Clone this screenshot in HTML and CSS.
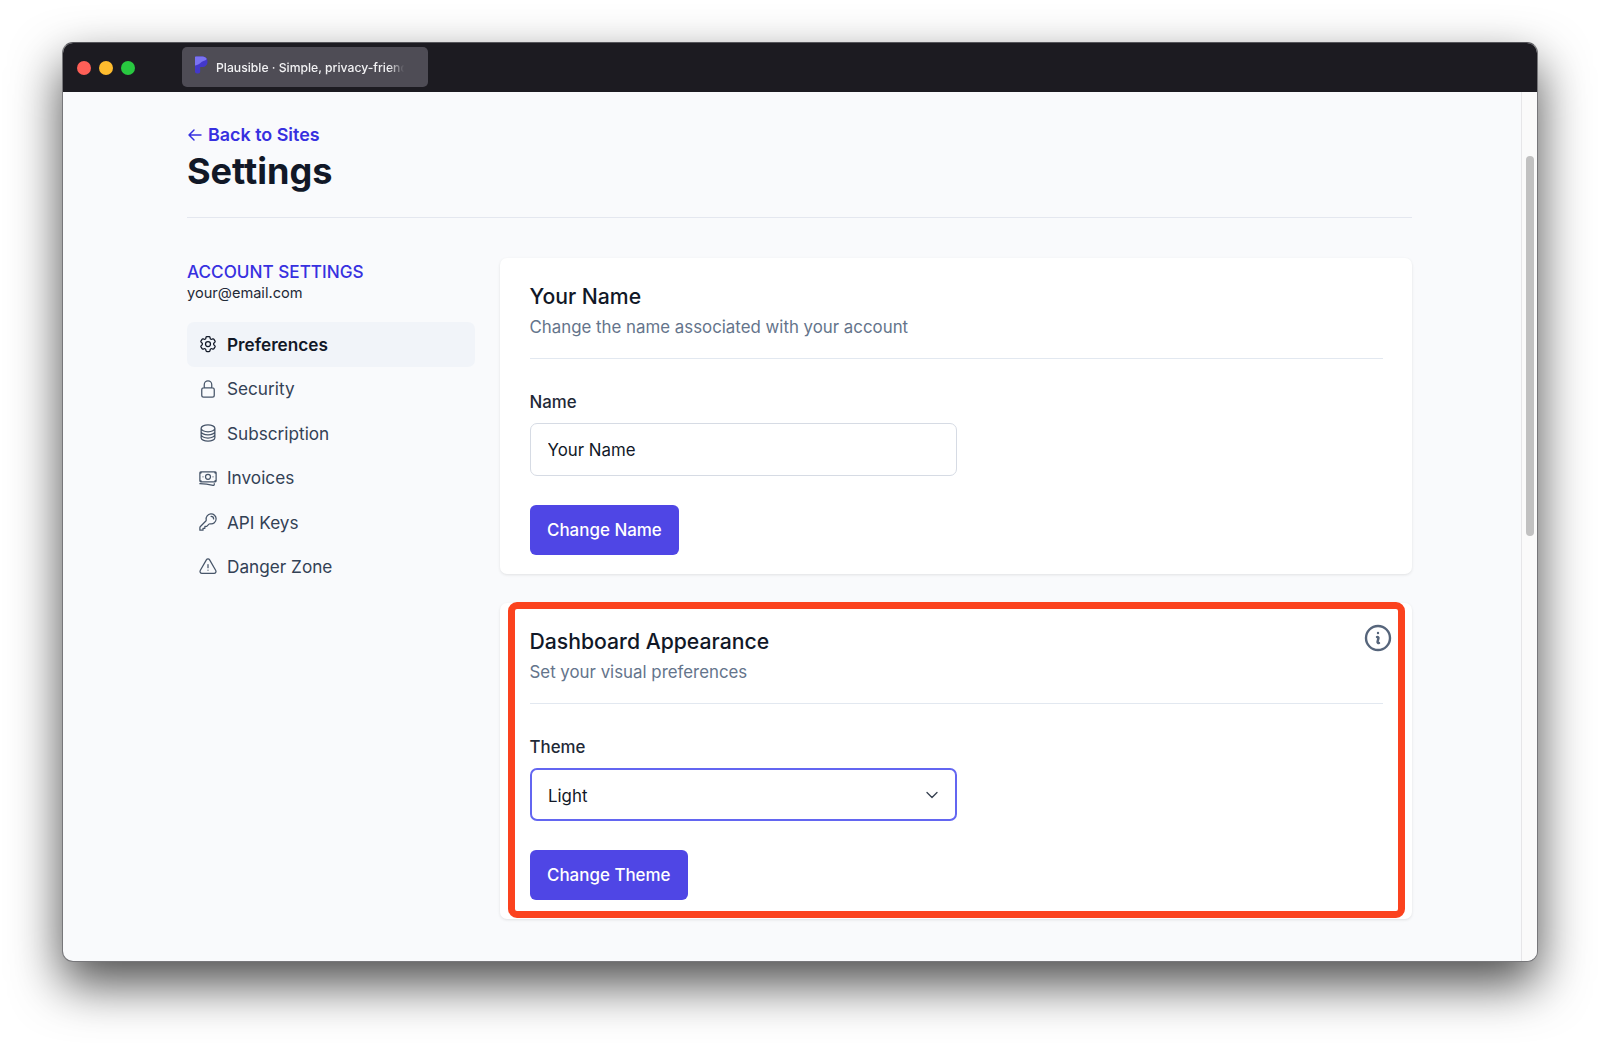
FILE: index.html
```html
<!DOCTYPE html>
<html>
  <head>
    <meta charset="utf-8" />
    <title>Plausible - Settings</title>
    <link rel="stylesheet" href="styles.css">
  </head>
  <body>
    <div class="window">
      <div class="titlebar">
        <div class="lights">
          <span class="light light-red"></span>
          <span class="light light-yellow"></span>
          <span class="light light-green"></span>
        </div>
        <div class="tab">
          <svg class="tab-logo" viewBox="0 0 14 18">
            <path d="M1 1.500C1 .8 1.500.5 2 .5h6.500c3 0 5 2.200 5 5.200 0 3.100-2.200 5.300-5.200 5.300H6.200v4.500c0 1.200-.8 2-2 2H3c-1.200 0-2-.8-2-2z" fill="#4338ca"/>
            <path d="M1 1.500C1 .8 1.500.5 2 .5h6.500c2 0 3.500 1 4.300 2.400-1.800 2.300-3.300 1.500-5.300 3.200C5.800 7.700 3.600 9.500 1 9.400z" fill="#7a72f2"/>
          </svg>
          <span class="tab-title">Plausible · Simple, privacy-friend</span>
        </div>
      </div>
      <div class="viewport">
        <div class="page">
          <div class="page-header">
            <a class="back-link" href="#">
              <svg class="back-arrow" viewBox="0 0 24 24"><path d="M10.500 19.500 3 12m0 0 7.500-7.500M3 12h18"/></svg>
              Back to Sites
            </a>
            <h1>Settings</h1>
          </div>
          <div class="columns">
            <div class="sidebar">
              <div class="sidebar-title">ACCOUNT SETTINGS</div>
              <div class="sidebar-email">your@email.com</div>
              <div class="nav">
                <a class="nav-item active" href="#">
                  <svg class="icon" viewBox="0 0 24 24"><path d="M9.594 3.940c.09-.542.56-.94 1.110-.94h2.593c.55 0 1.020.398 1.110.94l.213 1.281c.063.374.313.686.645.87.074.04.147.083.22.127.325.196.72.257 1.075.124l1.217-.456a1.125 1.125 0 0 1 1.370.49l1.296 2.247a1.125 1.125 0 0 1-.26 1.431l-1.003.827c-.293.241-.438.613-.43.992a7.723 7.723 0 0 1 0 .255c-.008.378.137.75.43.991l1.004.827c.424.35.534.955.26 1.430l-1.298 2.247a1.125 1.125 0 0 1-1.369.491l-1.217-.456c-.355-.133-.75-.072-1.076.124a6.470 6.470 0 0 1-.22.128c-.331.183-.581.495-.644.869l-.213 1.281c-.09.543-.56.94-1.110.94h-2.594c-.55 0-1.019-.398-1.110-.94l-.213-1.281c-.062-.374-.312-.686-.644-.87a6.520 6.520 0 0 1-.22-.127c-.325-.196-.72-.257-1.076-.124l-1.217.456a1.125 1.125 0 0 1-1.369-.49l-1.297-2.247a1.125 1.125 0 0 1 .26-1.431l1.004-.827c.292-.24.437-.613.43-.991a6.932 6.932 0 0 1 0-.255c.007-.38-.138-.751-.43-.992l-1.004-.827a1.125 1.125 0 0 1-.26-1.430l1.297-2.247a1.125 1.125 0 0 1 1.370-.491l1.216.456c.356.133.751.072 1.076-.124.072-.044.146-.086.22-.128.332-.183.582-.495.644-.869l.214-1.280Z"/><path d="M15 12a3 3 0 1 1-6 0 3 3 0 0 1 6 0Z"/></svg>
                  Preferences
                </a>
                <a class="nav-item" href="#">
                  <svg class="icon" viewBox="0 0 24 24"><path d="M16.500 10.500V6.750a4.500 4.500 0 1 0-9 0v3.750m-.75 11.250h10.500a2.250 2.250 0 0 0 2.250-2.250v-6.750a2.250 2.250 0 0 0-2.250-2.250H6.750a2.250 2.250 0 0 0-2.250 2.250v6.750a2.250 2.250 0 0 0 2.250 2.250Z"/></svg>
                  Security
                </a>
                <a class="nav-item" href="#">
                  <svg class="icon" viewBox="0 0 24 24"><path d="M20.250 6.375c0 2.278-3.694 4.125-8.250 4.125S3.750 8.653 3.750 6.375m16.500 0c0-2.278-3.694-4.125-8.250-4.125S3.750 4.097 3.750 6.375m16.500 0v11.250c0 2.278-3.694 4.125-8.250 4.125s-8.250-1.847-8.250-4.125V6.375m16.500 0v3.750m-16.500-3.750v3.750m16.500 0v3.750C20.250 16.153 16.556 18 12 18s-8.250-1.847-8.250-4.125v-3.750m16.500 0c0 2.278-3.694 4.125-8.250 4.125s-8.250-1.847-8.250-4.125"/></svg>
                  Subscription
                </a>
                <a class="nav-item" href="#">
                  <svg class="icon" viewBox="0 0 24 24"><path d="M2.250 18.750a60.070 60.070 0 0 1 15.797 2.101c.727.198 1.453-.342 1.453-1.096V18.750M3.750 4.500v.75A.75.75 0 0 1 3 6h-.75m0 0v-.375c0-.621.504-1.125 1.125-1.125H20.250M2.250 6v9m18-10.500v.75c0 .414.336.75.75.75h.75m-1.500-1.500h.375c.621 0 1.125.504 1.125 1.125v9.750c0 .621-.504 1.125-1.125 1.125h-.375m1.500-1.500H21a.75.75 0 0 0-.75.75v.75m0 0H3.750m0 0h-.375a1.125 1.125 0 0 1-1.125-1.125V15m1.500 1.500v-.75A.75.75 0 0 0 3 15h-.75M15 10.500a3 3 0 1 1-6 0 3 3 0 0 1 6 0Zm3 0h.008v.008H18V10.500Zm-12 0h.008v.008H6V10.500Z"/></svg>
                  Invoices
                </a>
                <a class="nav-item" href="#">
                  <svg class="icon" viewBox="0 0 24 24"><path d="M15.750 5.250a3 3 0 0 1 3 3m3 0a6 6 0 0 1-7.029 5.912c-.563-.097-1.159.026-1.563.43L10.500 17.250H8.250v2.250H6v2.250H2.250v-2.818c0-.597.237-1.170.659-1.591l6.499-6.499c.404-.404.527-1 .43-1.563A6 6 0 1 1 21.750 8.250Z"/></svg>
                  API Keys
                </a>
                <a class="nav-item" href="#">
                  <svg class="icon" viewBox="0 0 24 24"><path d="M12 9v3.750m-9.303 3.376c-.866 1.500.217 3.374 1.948 3.374h14.710c1.730 0 2.813-1.874 1.948-3.374L13.949 3.378c-.866-1.500-3.032-1.500-3.898 0L2.697 16.126ZM12 15.750h.007v.008H12v-.008Z"/></svg>
                  Danger Zone
                </a>
              </div>
            </div>
            <div class="cards">
              <div class="card">
                <h2>Your Name</h2>
                <p class="card-sub">Change the name associated with your account</p>
                <div class="card-rule"></div>
                <label class="field-label">Name</label>
                <input class="field" type="text" value="Your Name" />
                <button class="btn">Change Name</button>
              </div>
              <div class="card">
                <svg class="card-info" viewBox="0 0 24 24"><path d="m11.250 11.250.041-.02a.75.75 0 0 1 1.063.852l-.708 2.836a.75.75 0 0 0 1.063.853l.041-.021M21 12a9 9 0 1 1-18 0 9 9 0 0 1 18 0Zm-9-3.750h.008v.008H12V8.250Z"/></svg>
                <h2>Dashboard Appearance</h2>
                <p class="card-sub">Set your visual preferences</p>
                <div class="card-rule"></div>
                <label class="field-label">Theme</label>
                <div class="select-wrap">
                  <select class="field field-focus">
                    <option>Light</option>
                    <option>Dark</option>
                    <option>System</option>
                  </select>
                  <svg class="select-chevron" viewBox="0 0 24 24"><path d="m19.500 8.250-7.500 7.500-7.500-7.500"/></svg>
                </div>
                <button class="btn">Change Theme</button>
                <div class="highlight"></div>
              </div>
            </div>
          </div>
        </div>
        <div class="scrollbar">
          <div class="scrollbar-thumb"></div>
        </div>
      </div>
    </div>
  </body>
</html>
```

FILE: styles.css
```css
* {
    box-sizing: border-box;
}
body {
    font-family: Inter, "Liberation Sans", sans-serif;
    background: #ffffff;
    margin: 0;
    padding: 42px 62px 0 62px;
    height: 1043px;
    overflow: hidden;
}
.window {
    display: flex;
    flex-direction: column;
    height: 920px;
    background: #f9fafc;
    border-radius: 11px;
    overflow: hidden;
    border: 1px solid #77777a;
    border-top-color: #55555a;
    box-shadow: 0 22px 50px rgba(0, 0, 0, 0.7);
}
.titlebar {
    display: flex;
    align-items: center;
    flex: 0 0 49px;
    background: #1c1b21;
    padding-left: 14px;
}
.lights {
    display: flex;
    gap: 8px;
    width: 105px;
}
.light {
    width: 14px;
    height: 14px;
    border-radius: 50%;
}
.light-red {
    background: #fe5f57;
}
.light-yellow {
    background: #febc2e;
}
.light-green {
    background: #28c840;
}
.tab {
    display: flex;
    align-items: center;
    width: 246px;
    height: 40px;
    margin-bottom: 2px;
    padding: 2px 0 0 12px;
    background: #4e4c55;
    border-radius: 5px;
}
.tab-logo {
    flex: none;
    width: 14px;
    height: 18px;
    margin-right: 8px;
    margin-bottom: 5px;
}
.tab-title {
    font-size: 12.2px;
    font-weight: 500;
    color: #f2f2f4;
    white-space: nowrap;
    -webkit-mask-image: linear-gradient(to right, #000 90%, transparent 98%);
    mask-image: linear-gradient(to right, #000 90%, transparent 98%);
}
.viewport {
    display: flex;
    flex: 1;
    min-height: 0;
}
.page {
    flex: 1;
    min-width: 0;
    padding: 30px 109px 0 124px;
    overflow: hidden;
}
.page-header {
    height: 96px;
    border-bottom: 1px solid #e4e7ef;
}
.back-link {
    display: flex;
    align-items: center;
    gap: 5px;
    font-size: 17.9px;
    line-height: 25px;
    font-weight: 600;
    color: #3730e0;
    text-decoration: none;
}
.back-arrow {
    width: 16px;
    height: 16px;
    fill: none;
    stroke: currentColor;
    stroke-width: 2.2;
    stroke-linecap: round;
    stroke-linejoin: round;
}
h1 {
    margin: 1px 0 0 0;
    font-size: 36.1px;
    line-height: 46px;
    font-weight: 700;
    color: #111827;
}
.columns {
    display: flex;
    gap: 25px;
    padding-top: 40px;
}
.sidebar {
    flex: 0 0 288px;
    padding-top: 1px;
}
.sidebar-title {
    font-size: 17.15px;
    line-height: 26px;
    font-weight: 500;
    color: #3730e0;
}
.sidebar-email {
    font-size: 14.6px;
    line-height: 17px;
    color: #1f2937;
}
.nav {
    margin-top: 20px;
}
.nav-item {
    display: flex;
    align-items: center;
    gap: 9.5px;
    height: 44.500px;
    padding-left: 10.5px;
    border-radius: 7px;
    font-size: 17.2px;
    color: #334155;
    text-decoration: none;
}
.nav-item.active {
    background: #f1f4f9;
    font-weight: 600;
    color: #111827;
}
.icon {
    flex: none;
    width: 20px;
    height: 20px;
    fill: none;
    stroke: #475569;
    stroke-width: 1.5;
    stroke-linecap: round;
    stroke-linejoin: round;
}
.nav-item.active .icon {
    stroke: #111827;
}
.cards {
    flex: 1;
    min-width: 0;
}
.card {
    position: relative;
    background: #ffffff;
    border-radius: 7px;
    box-shadow: 0 1px 3px rgba(0, 0, 0, 0.1);
    padding: 24px 29px 19px 29.5px;
    margin-bottom: 29px;
}
h2 {
    margin: 0;
    font-size: 21.2px;
    line-height: 28px;
    font-weight: 500;
    color: #111827;
}
.card-sub {
    margin: 3px 0 0 0;
    font-size: 16.85px;
    line-height: 29px;
    color: #64748b;
}
.card-rule {
    height: 1px;
    background: #e2e8f0;
    margin: 16px 0 30px 0;
}
.field-label {
    display: block;
    font-size: 16.85px;
    line-height: 26px;
    font-weight: 500;
    color: #1f2937;
    margin-bottom: 8px;
}
.field {
    display: block;
    width: 427px;
    height: 53px;
    padding: 0 17px;
    background: #ffffff;
    border: 1.5px solid #d6dbe4;
    border-radius: 7px;
    font-family: inherit;
    font-size: 16.85px;
    color: #111827;
    outline: none;
    appearance: none;
    -webkit-appearance: none;
}
.field-focus {
    border: 2px solid #6366f1;
    padding: 2px 16.5px 0 16.5px;
}
.select-wrap {
    position: relative;
    width: 427px;
}
.select-chevron {
    position: absolute;
    top: 18.5px;
    right: 17px;
    width: 16px;
    height: 16px;
    fill: none;
    stroke: #374151;
    stroke-width: 2;
    stroke-linecap: round;
    stroke-linejoin: round;
}
.btn {
    display: block;
    height: 50px;
    margin-top: 29px;
    padding: 0 17.5px;
    background: #4f46e5;
    border: none;
    border-radius: 6px;
    font-family: inherit;
    font-size: 16.95px;
    font-weight: 500;
    color: #ffffff;
}
.card-info {
    position: absolute;
    top: 19px;
    right: 18px;
    width: 32px;
    height: 32px;
    fill: none;
    stroke: #56657b;
    stroke-width: 1.8;
    stroke-linecap: round;
    stroke-linejoin: round;
}
.highlight {
    position: absolute;
    top: -1px;
    left: 8px;
    right: 7px;
    bottom: 1px;
    border: 7px solid #fb421e;
    border-radius: 9px;
}
.scrollbar {
    flex: 0 0 16px;
    padding: 64px 3px 0 4px;
    background: #fafafa;
    border-left: 1px solid #e6e6e8;
}
.scrollbar-thumb {
    height: 380px;
    background: #c1c1c1;
    border-radius: 5px;
}
```
